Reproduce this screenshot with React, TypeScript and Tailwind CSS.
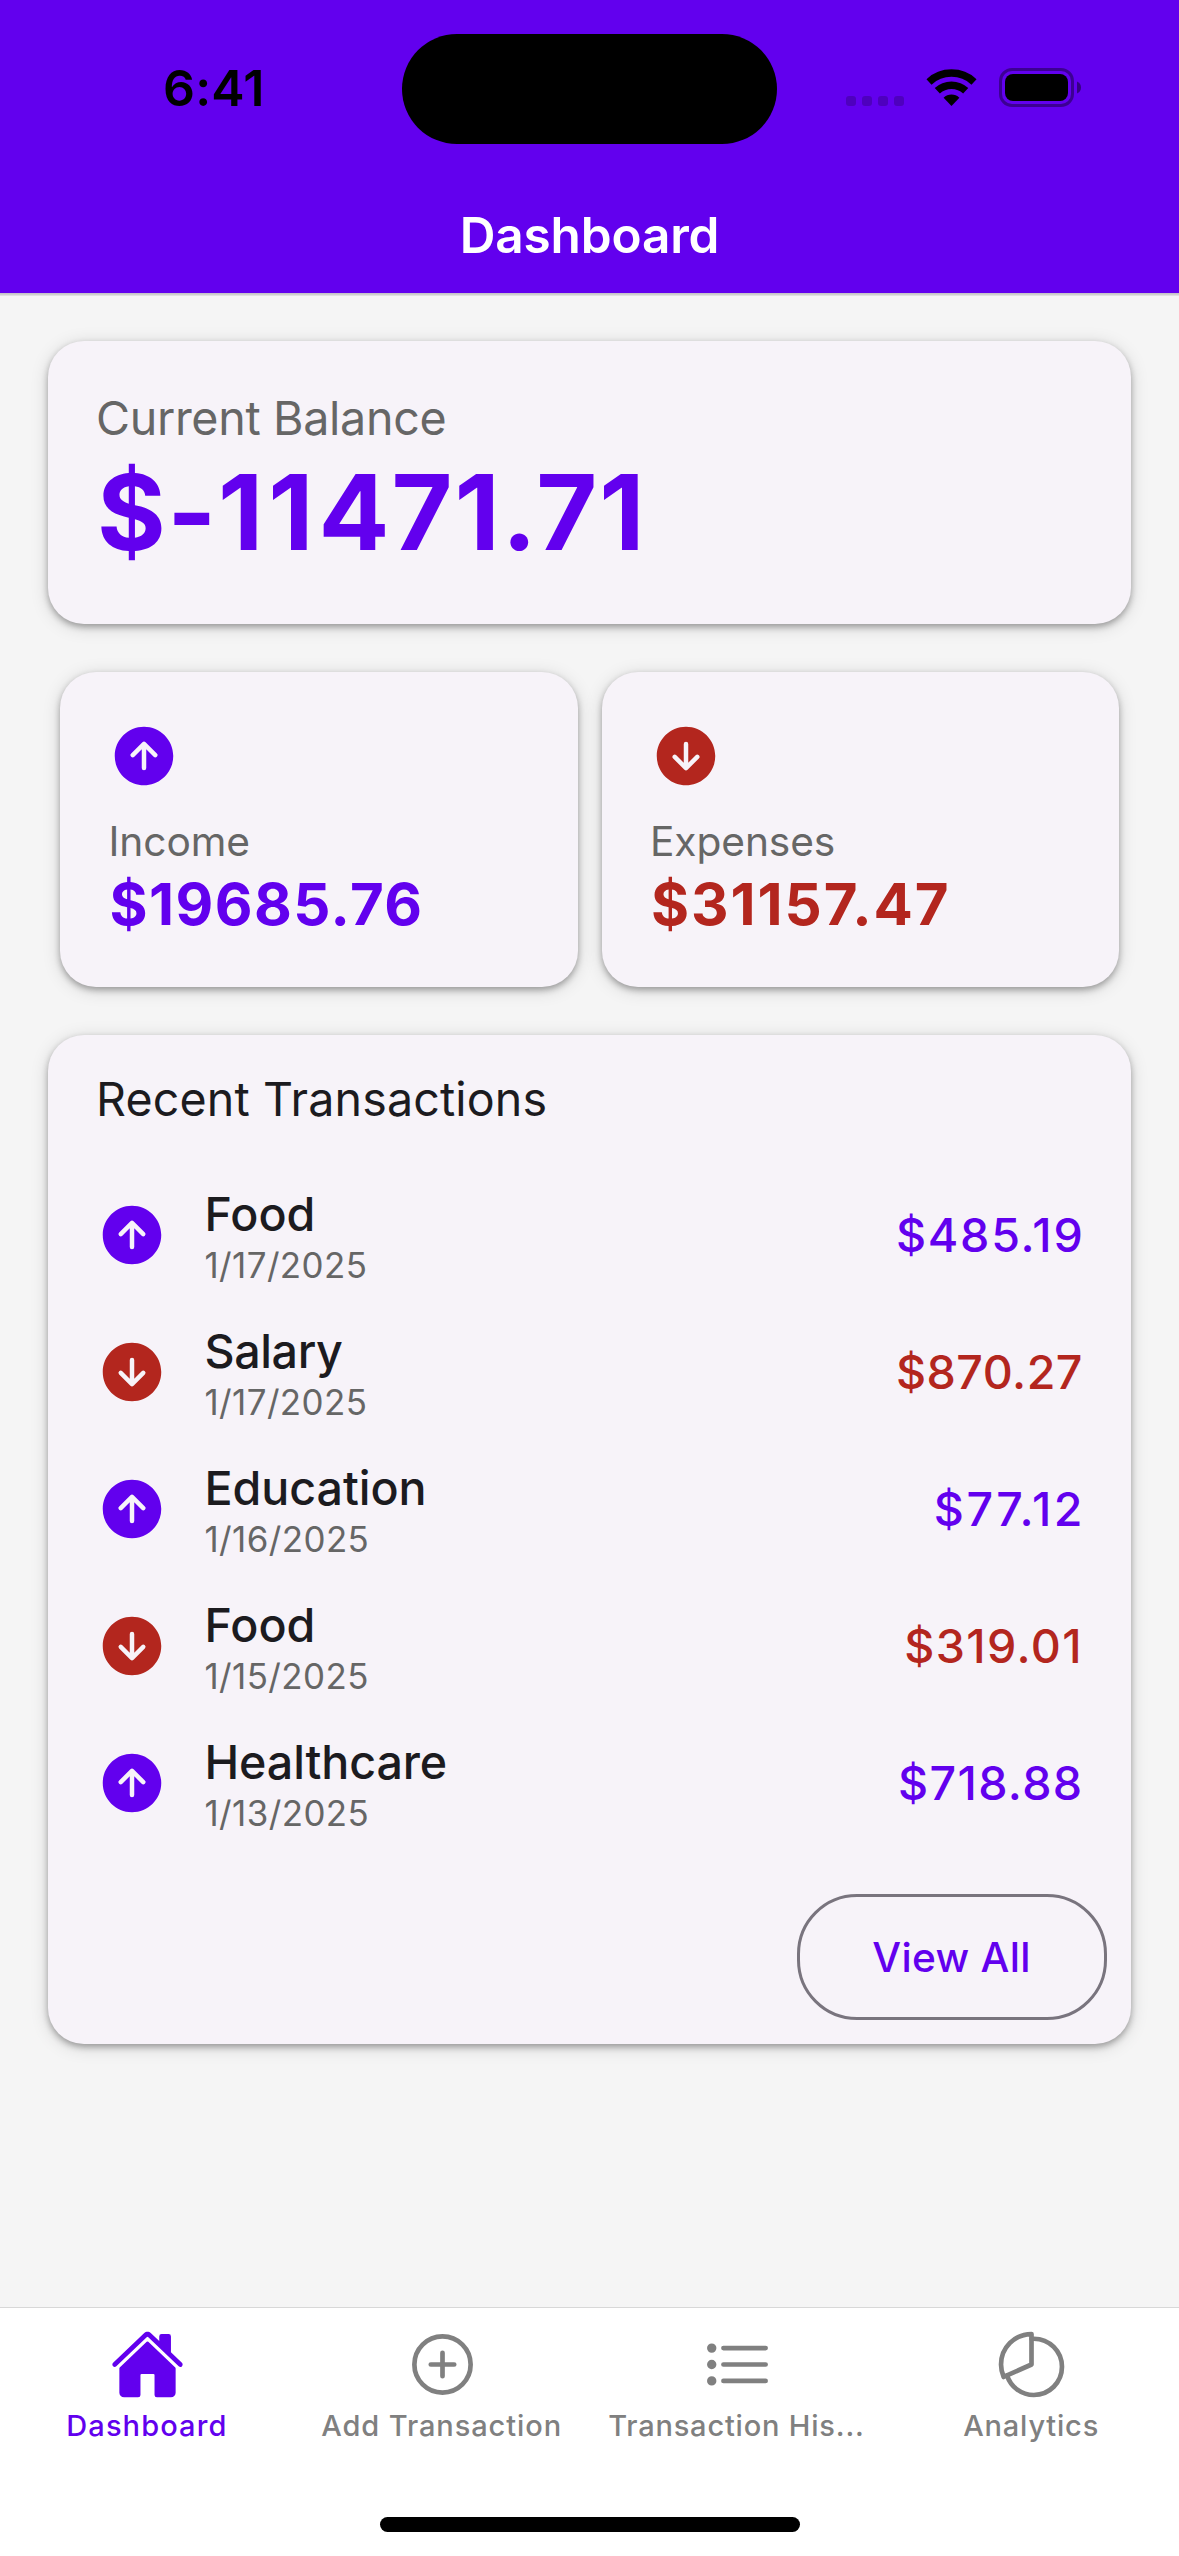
import React from "react";
import {
  IoAddCircleOutline,
  IoArrowDownCircle,
  IoArrowUpCircle,
  IoHome,
  IoListOutline,
  IoPieChartOutline,
} from "react-icons/io5";

const CARD =
  "bg-[#f7f3f9] rounded-[36px] shadow-[0_3px_6px_rgba(0,0,0,0.3),0_3px_18px_rgba(0,0,0,0.15)]";

type Kind = "in" | "out";

const transactions: {
  kind: Kind;
  name: string;
  nameClass: string;
  date: string;
  amount: string;
  amountClass: string;
}[] = [
  { kind: "in", name: "Food", nameClass: "", date: "1/17/2025", amount: "$485.19", amountClass: "tracking-[1.75px] -mr-[1.5px]" },
  { kind: "out", name: "Salary", nameClass: "tracking-[-0.4px]", date: "1/17/2025", amount: "$870.27", amountClass: "tracking-[0.5px]" },
  { kind: "in", name: "Education", nameClass: "tracking-[-0.05px]", date: "1/16/2025", amount: "$77.12", amountClass: "tracking-[2.44px] -mr-[2px]" },
  { kind: "out", name: "Food", nameClass: "", date: "1/15/2025", amount: "$319.01", amountClass: "tracking-[1.38px]" },
  { kind: "in", name: "Healthcare", nameClass: "tracking-[-0.1px]", date: "1/13/2025", amount: "$718.88", amountClass: "tracking-[1.35px] -mr-[0.5px]" },
];

function Direction({ kind }: { kind: Kind }) {
  return kind === "in" ? (
    <IoArrowUpCircle className="size-[72px] shrink-0 text-[#6200ee]" />
  ) : (
    <IoArrowDownCircle className="size-[72px] shrink-0 text-[#b3261e]" />
  );
}

function StatusBar() {
  return (
    <div className="grid h-[177px] grid-cols-[402px_375px_402px] items-center">
      <div className="-mt-px pl-[163px] text-[50px] font-semibold leading-[60px] tracking-[0.2px] text-black">
        6:41
      </div>
      <div className="mt-px h-[110px] rounded-full bg-black" />
      <div className="-mt-[2px] flex items-center pl-[69px]">
        <div className="mt-[27px] flex gap-[6px]">
          <span className="size-[10px] rounded-[3px] bg-black/20" />
          <span className="size-[10px] rounded-[3px] bg-black/20" />
          <span className="size-[10px] rounded-[3px] bg-black/20" />
          <span className="size-[10px] rounded-[3px] bg-black/20" />
        </div>
        <svg className="ml-[22px] h-[37px] w-[51px]" viewBox="0 0 51 37">
          <g fill="none" stroke="#000" strokeWidth="7.5">
            <path d="M3 12.9A33.2 33.2 0 0 1 48 12.9" />
            <path d="M11.3 21.8A20.8 20.8 0 0 1 39.7 21.8" />
          </g>
          <path d="M25.5 37L17.6 28.8A11.4 11.4 0 0 1 33.4 28.8Z" />
        </svg>
        <svg className="ml-[22px] h-[39px] w-[82px]" viewBox="0 0 82 39">
          <rect x="1.5" y="1.5" width="72" height="36" rx="11.5" fill="none" stroke="#000" strokeOpacity="0.38" strokeWidth="3" />
          <rect x="6" y="6" width="63" height="27" rx="8" />
          <path d="M78 13.5c2.500 1 4 3.300 4 6s-1.500 5-4 6Z" fillOpacity="0.45" />
        </svg>
      </div>
    </div>
  );
}

function StatCard({ kind, label, value, valueClass }: { kind: Kind; label: string; value: string; valueClass: string }) {
  return (
    <section className={`${CARD} flex h-[315px] flex-1 flex-col p-12`}>
      <Direction kind={kind} />
      <div className="mt-5 pl-[0.5px] text-[40.7px] leading-[60px] tracking-[-0.1px] text-[#666]">{label}</div>
      <div className={`-mt-px pl-[1.5px] text-[58.2px] font-bold leading-[66px] ${valueClass}`}>{value}</div>
    </section>
  );
}

const tabs = [
  { label: "Dashboard", Icon: IoHome, tone: "text-[#6200ee]", tracking: "tracking-[1.1px]", shift: "" },
  { label: "Add Transaction", Icon: IoAddCircleOutline, tone: "text-[#808080]", tracking: "tracking-[0.91px]", shift: "" },
  { label: "Transaction His...", Icon: IoListOutline, tone: "text-[#808080]", tracking: "tracking-[0.81px]", shift: "ml-[2px]" },
  { label: "Analytics", Icon: IoPieChartOutline, tone: "text-[#808080]", tracking: "tracking-[0.81px]", shift: "" },
];

export default function App() {
  return (
    <div className="flex h-[2556px] w-[1179px] flex-col overflow-hidden bg-[#f5f5f5] font-['Inter',sans-serif]">
      <header className="h-[293px] shrink-0 bg-[#6200ee] shadow-[0_1px_0_#c6c3ca,0_2px_0_#cfcfcf,0_3px_0_#e0e0e0]">
        <StatusBar />
        <h1 className="mt-7 text-center text-[49.5px] font-semibold leading-[60px] tracking-[-0.17px] text-white">
          Dashboard
        </h1>
      </header>

      <main className="flex flex-1 flex-col gap-12 p-12">
        <section className={`${CARD} h-[283px] px-12 pt-[41px]`}>
          <div className="text-[46.6px] leading-[72px] tracking-[-0.32px] text-[#666]">Current Balance</div>
          <div className="pl-px text-[105px] font-bold leading-[116px] tracking-[2px] text-[#6200ee]">
            <span className="tracking-[1.5px]">$-</span>
            <span className="tracking-[5px]">11</span>471.71
          </div>
        </section>

        <div className="flex gap-6 px-3">
          <StatCard kind="in" label="Income" value="$19685.76" valueClass="text-[#6200ee] tracking-[1.42px]" />
          <StatCard kind="out" label="Expenses" value="$31157.47" valueClass="text-[#b3261e] tracking-[1.93px]" />
        </div>

        <section className={`${CARD} flex flex-col px-12 pt-7 pb-6`}>
          <h2 className="text-[46.6px] font-normal leading-[72px] tracking-[0.13px] text-[#1c1b1f]">
            Recent Transactions
          </h2>
          <ul className="mt-[31px]">
            {transactions.map((t, i) => (
              <li key={i} className="flex h-[137px] items-center">
                <Direction kind={t.kind} />
                <div className="ml-9 flex-1 pt-[7px] pl-[0.5px]">
                  <div className={`text-[46.6px] font-medium leading-[54px] text-[#1c1b1f] ${t.nameClass}`}>{t.name}</div>
                  <div className="text-[34.9px] leading-[48px] tracking-[0.42px] text-[#666]">{t.date}</div>
                </div>
                <div
                  className={`text-[46.6px] font-medium leading-[54px] ${t.amountClass} ${
                    t.kind === "in" ? "text-[#6200ee]" : "text-[#b3261e]"
                  }`}
                >
                  {t.amount}
                </div>
              </li>
            ))}
          </ul>
          <button className="-mr-6 mt-[43px] flex h-[126px] w-[310px] items-center justify-center self-end rounded-[60px] border-[3px] border-[#79747e] pt-px pr-px text-[40.7px] font-medium leading-[60px] tracking-[0.27px] text-[#6200ee]">
            View All
          </button>
        </section>
      </main>

      <footer className="flex h-[249px] shrink-0 flex-col items-center border-t border-[#d8d8d8] bg-white pt-[19px] pb-6">
        <nav className="grid w-full grid-cols-4">
          {tabs.map(({ label, Icon, tone, tracking, shift }) => (
            <a key={label} className={`flex flex-col items-center ${tone}`}>
              <Icon className={`size-[75px] ${shift}`} />
              <span className={`mt-[6px] mr-px whitespace-nowrap text-[29px] font-medium leading-[36px] ${tracking}`}>{label}</span>
            </a>
          ))}
        </nav>
        <div className="mt-auto h-[15px] w-[420px] rounded-full bg-black" />
      </footer>
    </div>
  );
}
